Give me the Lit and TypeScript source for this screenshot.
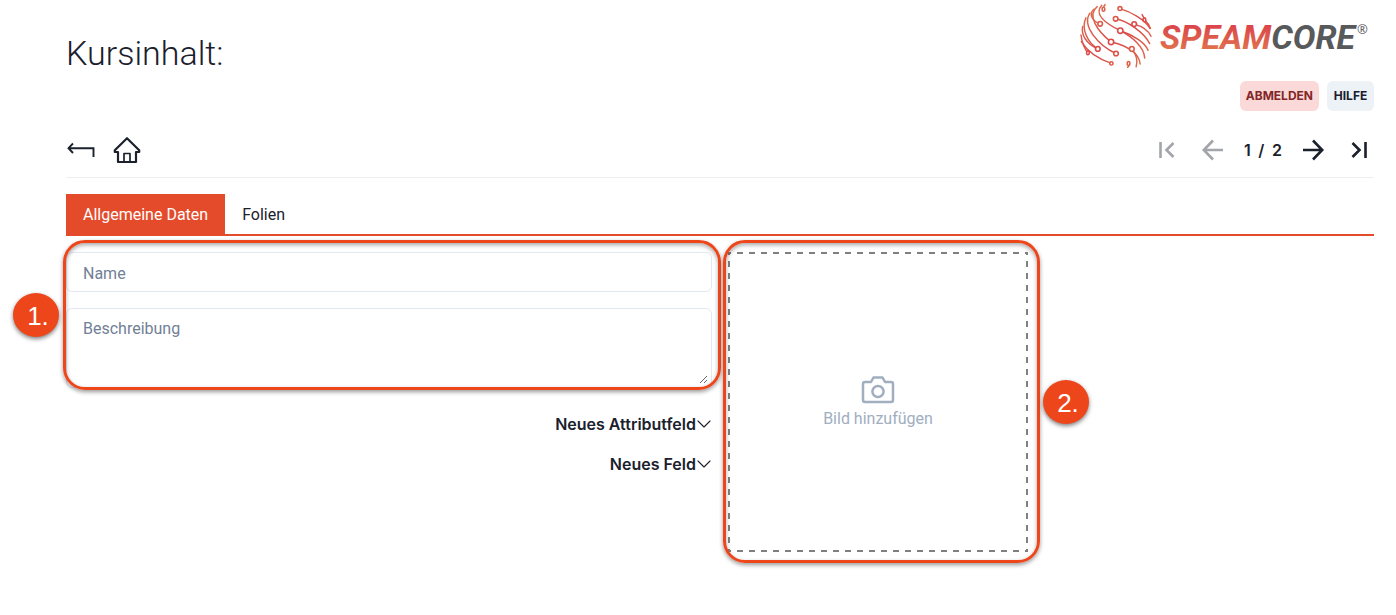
import { LitElement, html, css, svg } from "lit";
import { customElement, state } from "lit/decorators.js";

@customElement("speam-logo")
class SpeamLogo extends LitElement {
  static styles = css`
    :host { display: flex; align-items: center; height: 72px; gap: 8px; }
    svg { overflow: visible; }
    .globe { width: 72px; height: 70px; flex: none; }
    .word { width: 208px; height: 40px; flex: none; }
    .name { font: italic 700 34px Roboto, sans-serif; }
    .core { fill: #58595b; }
    .mark { font: 500 13px "Open Sans", sans-serif; fill: #58595b; }
  `;

  private arcs = [
    "M127 24C160 34 202 56 218 84",
    "M194 42Q200 52 202 58Q214 70 219 84",
    "M114 55C150 62 200 96 217 130",
    "M170 71C196 78 214 92 221 108",
    "M82 12Q76 18 77 26",
    "M72 14C48 40 78 66 128 91",
    "M128 91C168 104 204 128 212 150",
    "M58 18C26 44 58 92 100 125",
    "M100 125C150 136 186 160 188 192",
    "M128 91C164 110 200 140 202 174",
    "M163 146C176 160 182 182 176 200",
    "M48 26C30 42 46 64 67 70",
    "M36 38C10 76 62 136 115 160",
    "M24 52C8 86 30 128 60 146",
    "M14 78C8 112 32 132 58 146",
    "M9 104Q14 140 30 158",
    "M10 124C30 156 66 178 101 190",
    "M153 190Q158 196 150 202",
  ];

  private nodes = [
    [77, 26, 4, 6], [127, 24, 6, 6], [114, 55, 7, 7], [170, 71, 7, 7], [201, 58, 4, 6],
    [67, 70, 7, 7], [128, 91, 8, 8], [100, 125, 8, 8], [60, 146, 7, 7], [115, 160, 7, 7],
    [163, 146, 7, 7], [30, 158, 4, 6], [101, 190, 5, 5], [153, 190, 4, 6],
  ];

  render() {
    return html`
      <svg class="globe" viewBox="6 4 218 206" aria-hidden="true">
        <defs>
          <linearGradient id="g" gradientUnits="userSpaceOnUse" x1="36" y1="10" x2="176" y2="200">
            <stop offset="0" stop-color="#de6e4b" />
            <stop offset=".55" stop-color="#da4a4a" />
            <stop offset="1" stop-color="#de6a4b" />
          </linearGradient>
        </defs>
        <g fill="none" stroke="url(#g)" stroke-width="4.4" stroke-linecap="round">
          ${this.arcs.map((d) => svg`<path d=${d} />`)}
          ${this.nodes.map(([x, y, rx, ry]) => svg`<ellipse cx=${x} cy=${y} rx=${rx} ry=${ry} fill="#fff" stroke-width="4.8" />`)}
        </g>
      </svg>
      <svg class="word" viewBox="0 0 208 40" role="img" aria-label="Speamcore">
        <defs>
          <linearGradient id="w" x1="0" y1="0" x2="0" y2="1">
            <stop offset=".2" stop-color="#db444b" />
            <stop offset=".8" stop-color="#e0714d" />
          </linearGradient>
        </defs>
        <text class="name" x="0" y="33"><tspan fill="url(#w)">SPEAM</tspan><tspan class="core">CORE</tspan></text>
        <text class="mark" x="197" y="18">®</text>
      </svg>
    `;
  }
}

@customElement("app-root")
class AppRoot extends LitElement {
  static styles = css`
    :host {
      display: block;
      font-family: Roboto, sans-serif;
      font-size: 16px;
      line-height: 24px;
      color: #1a202c;
    }
    * { box-sizing: border-box; }
    button, input, textarea { font: inherit; color: inherit; margin: 0; }
    button { border: 0; background: none; padding: 0; cursor: pointer; }
    svg { display: block; }
    .page { padding: 0 22px 52px 66px; }
    .top { display: flex; justify-content: space-between; align-items: flex-start; }
    h1 { margin: 0; padding-top: 29px; font-size: 34px; line-height: 48px; font-weight: 300; }
    .brand { display: flex; flex-direction: column; align-items: flex-end; gap: 9px; }
    speam-logo { margin-right: 6px; }
    .account { display: flex; gap: 8px; }
    .chip {
      height: 30px; min-width: 47px; padding: 0 6px; border-radius: 6px;
      font: 700 12px/30px Inter, sans-serif;
      background: #edf2f7;
    }
    .chip.out { background: #fad9d8; color: #822727; }
    .toolbar {
      display: flex; justify-content: space-between; align-items: center;
      height: 56px; margin-top: 11px; border-bottom: 1px solid #edeeef;
    }
    .nav { display: flex; align-items: center; gap: 17px; }
    .pager { display: flex; align-items: center; gap: 16px; }
    .pager button { width: 30px; display: grid; place-items: center; }
    .pager button:disabled { opacity: .4; color: inherit; }
    .count {
      display: flex; justify-content: space-between; width: 38px;
      font-family: Inter, sans-serif; font-weight: 600;
    }
    .tabs { display: flex; margin-top: 16px; border-bottom: 2px solid #e44b2b; }
    .tab { height: 40px; padding: 2px 17px 0; }
    .tab.on { background: #e44b2b; color: #fff; }
    .body { display: grid; grid-template-columns: 1fr 1fr; gap: 16px; margin-top: 16px; align-items: start; }
    .fields { position: relative; display: grid; gap: 16px; }
    .field {
      display: block; width: 100%; border: 1px solid #e2e8f0; border-radius: 6px;
      background: #fff; padding: 8px 16px 6px; outline: 0;
    }
    .field::placeholder { color: #718096; opacity: 1; }
    .name { height: 40px; }
    .text { height: 80px; resize: vertical; }
    .text::-webkit-resizer {
      background: url("data:image/svg+xml,%3Csvg xmlns='http://www.w3.org/2000/svg' width='15' height='15'%3E%3Cpath d='M4 11L11 4M8 11L11 8' stroke='%23666' fill='none'/%3E%3C/svg%3E") no-repeat;
    }
    .adders { display: flex; flex-direction: column; align-items: flex-end; margin-top: 16px; }
    .adders button {
      display: flex; align-items: center; height: 40px;
      font-family: Inter, sans-serif; font-weight: 600;
    }
    .upload { position: relative; width: 300px; }
    .drop {
      --dash: #808080 0 3px, transparent 3px 9px, #808080 9px 12px;
      display: flex; flex-direction: column; align-items: center; justify-content: center;
      gap: 1px;
      width: 100%; height: 300px; color: #a0aec0;
      background:
        repeating-linear-gradient(90deg, var(--dash)) top / 100% 2px no-repeat,
        repeating-linear-gradient(90deg, var(--dash)) bottom / 100% 2px no-repeat,
        repeating-linear-gradient(var(--dash)) left / 2px 100% no-repeat,
        repeating-linear-gradient(var(--dash)) right / 2px 100% no-repeat;
    }
    .frame {
      position: absolute; border: 3px solid #ee461b; border-radius: 22px;
      box-shadow: 0 2px 4px rgba(0, 0, 0, .4), inset 0 2px 4px rgba(0, 0, 0, .35);
      pointer-events: none;
    }
    .fields .frame { inset: -12px -9px -2px -3px; }
    .upload .frame { inset: -12px -12px -11px -5px; }
    .badge {
      position: absolute; width: 46px; height: 44px; border-radius: 50%;
      background: #ee461b; color: #fff; text-align: center;
      font: 26px/46px "Liberation Sans", sans-serif; padding-left: 4px;
      box-shadow: 0 2px 4px rgba(0, 0, 0, .5);
    }
    .fields .badge { left: -53px; top: 41px; }
    .upload .badge { left: 315px; top: 128px; }
  `;

  @state() private tab = 0;

  private stroke(d: string, label: string, disabled = false) {
    return html`<button aria-label=${label} ?disabled=${disabled}>
      <svg width="24" height="24" viewBox="0 0 24 24" fill="none" stroke="currentColor" stroke-width="2.6">
        <path d=${d} />
      </svg>
    </button>`;
  }

  private adder(label: string) {
    return html`<button aria-haspopup="menu">${label}
      <svg width="16" height="16" viewBox="0 0 16 16" fill="none" stroke="currentColor" stroke-width="1.1" stroke-linecap="round" stroke-linejoin="round">
        <path d="M2 5l6 6 6-6" />
      </svg>
    </button>`;
  }

  render() {
    return html`
      <main class="page">
        <header class="top">
          <h1>Kursinhalt:</h1>
          <div class="brand">
            <speam-logo></speam-logo>
            <div class="account">
              <button class="chip out">ABMELDEN</button>
              <button class="chip">HILFE</button>
            </div>
          </div>
        </header>

        <div class="toolbar">
          <nav class="nav">
            <button aria-label="Zurück">
              <svg width="30" height="30" viewBox="0 0 30 30" fill="none" stroke="currentColor" stroke-width="1.9">
                <path d="M7 8.5L2.5 13.2 7 18M2.5 13.2H27.5V22" />
              </svg>
            </button>
            <button aria-label="Startseite">
              <svg width="28" height="28" viewBox="0 0 28 28" fill="none" stroke="currentColor" stroke-width="2.2" stroke-linejoin="round">
                <path d="M14 2.200L1.800 14.300V16H5V26H23V16H26.200V14.300Z" />
                <path d="M11 26V17.500H17V26" stroke-width="1.700" />
              </svg>
            </button>
          </nav>
          <div class="pager">
            ${this.stroke("M5.500 4V20M18.500 5L11.500 12L18.500 19", "Erste Seite", true)}
            ${this.stroke("M12 2.500L2.800 12L12 21.500M2.800 12H22", "Vorherige Seite", true)}
            <span class="count"><span>1</span><span>/</span><span>2</span></span>
            ${this.stroke("M12 2.500L21.200 12L12 21.500M21.200 12H2", "Nächste Seite")}
            ${this.stroke("M18.500 4V20M5.500 5L12.500 12L5.500 19", "Letzte Seite")}
          </div>
        </div>

        <div class="tabs" role="tablist">
          ${["Allgemeine Daten", "Folien"].map(
            (t, i) => html`<button class="tab ${this.tab === i ? "on" : ""}" role="tab"
              aria-selected=${this.tab === i} @click=${() => (this.tab = i)}>${t}</button>`
          )}
        </div>

        <section class="body">
          <div>
            <div class="fields">
              <input class="field name" aria-label="Name" placeholder="Name" />
              <textarea class="field text" aria-label="Beschreibung" placeholder="Beschreibung"></textarea>
              <div class="frame"></div>
              <div class="badge">1.</div>
            </div>
            <div class="adders">${this.adder("Neues Attributfeld")}${this.adder("Neues Feld")}</div>
          </div>
          <div class="upload">
            <button class="drop">
              <svg width="34" height="32" viewBox="0 0 34 32" fill="none" stroke="currentColor" stroke-width="2.500" stroke-linejoin="round">
                <path d="M4 8H10L12.500 3.500H21.500L24 8H30Q32 8 32 10V26Q32 28 30 28H4Q2 28 2 26V10Q2 8 4 8Z" />
                <circle cx="17" cy="17.500" r="5.600" />
              </svg>
              <span>Bild hinzufügen</span>
            </button>
            <div class="frame"></div>
            <div class="badge">2.</div>
          </div>
        </section>
      </main>
    `;
  }
}
